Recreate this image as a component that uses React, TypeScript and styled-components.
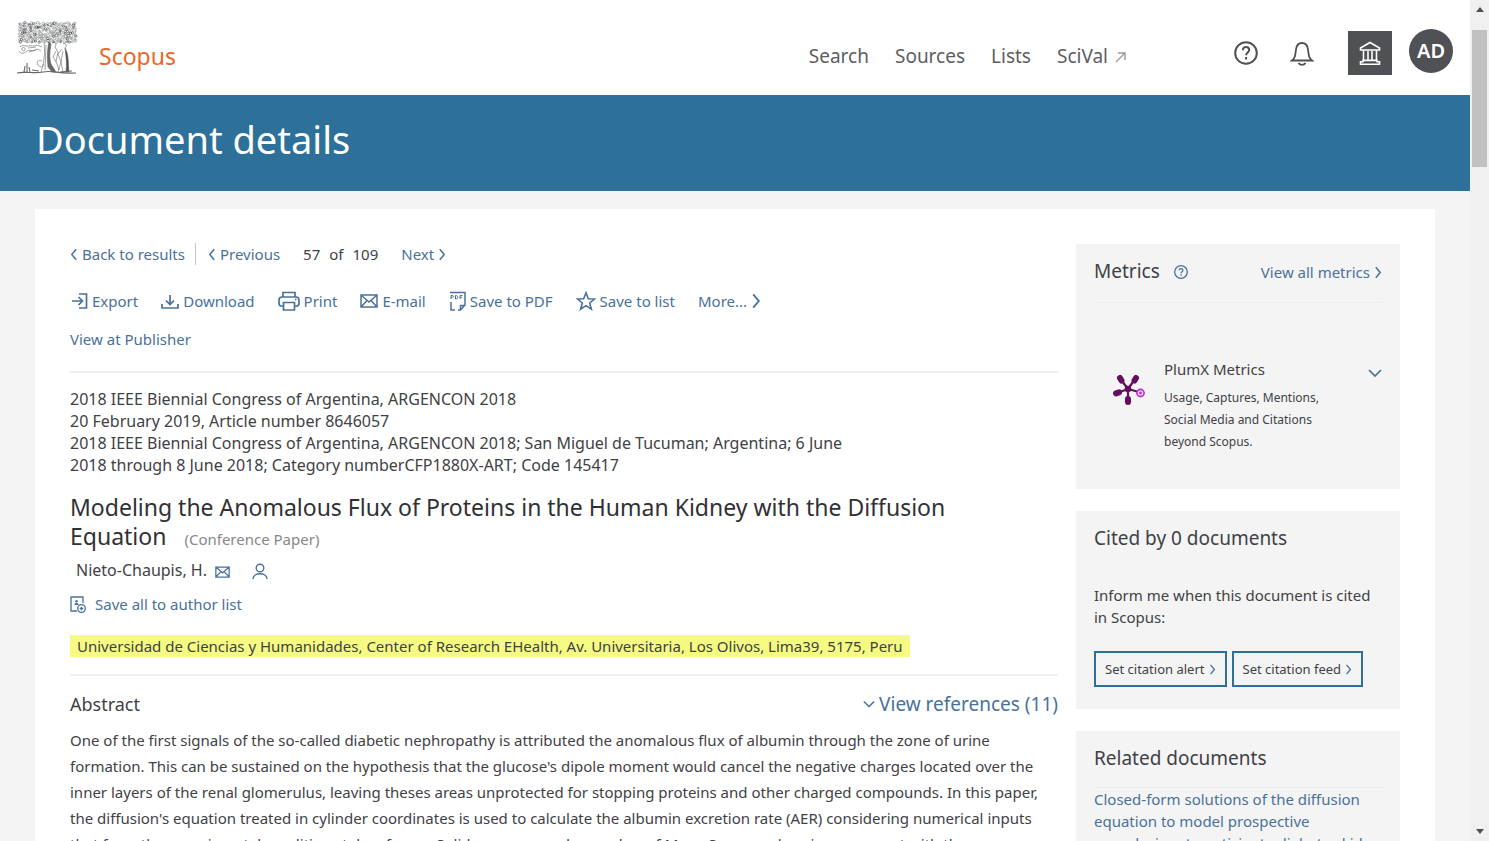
import React from "react";
import styled, { createGlobalStyle } from "styled-components";

const ink = "#3f4145";
const link = "#49719a";
const brand = "#2d7099";

const GlobalStyle = createGlobalStyle`
  *, *::before, *::after { box-sizing: border-box; }
  body {
    margin: 0;
    background: #f4f4f4;
    color: ${ink};
    font-family: "Noto Sans", "Open Sans", sans-serif;
    font-size: 15px;
    line-height: 22px;
  }
  h1, h2, p { margin: 0; padding: 0; font-weight: 400; }
  a { color: ${link}; text-decoration: none; }
  button { font: inherit; color: inherit; padding: 0; border: 0; background: none; cursor: pointer; }
  svg { display: block; flex: none; }
`;

const Window = styled.div`
  display: grid;
  grid-template-columns: minmax(0, 1fr) 19px;
  height: 100vh;
  overflow: hidden;
`;

const Page = styled.div`
  min-width: 0;
`;

const ScrollTrack = styled.div`
  display: flex;
  flex-direction: column;
  align-items: center;
  height: 100vh;
  padding: 7px 0;
  background: #f0f0f0;
`;

const ScrollThumb = styled.div`
  width: 15px;
  height: 137px;
  margin: 18px 0 auto;
  background: #c1c1c1;
`;

const Header = styled.header`
  display: flex;
  align-items: center;
  height: 95px;
  padding: 0 17px 0 16px;
  background: #fff;
`;

const Wordmark = styled.a`
  margin: 16px auto 0 21px;
  color: #e9682a;
  font-size: 23px;
  line-height: 32px;
`;

const Nav = styled.nav`
  display: flex;
  gap: 26px;
  margin: 16px 108px 0 0;
  a {
    display: flex;
    align-items: center;
    gap: 7px;
    color: #5c5e62;
    font-size: 19px;
    line-height: 28px;
  }
  svg { margin-top: 4px; }
`;

const Tools = styled.div`
  display: flex;
  align-items: center;
  margin-top: 10px;
`;

const IconButton = styled.button<{ $gap: number }>`
  display: grid;
  place-items: center;
  margin-right: ${(p) => p.$gap}px;
  color: #505155;
`;

const Institution = styled(IconButton)`
  width: 44px;
  height: 44px;
  background: #505155;
  color: #fff;
`;

const Avatar = styled.button`
  width: 44px;
  height: 44px;
  margin-bottom: 3px;
  border-radius: 50%;
  background: #505155;
  color: #fff;
  font-size: 20px;
  font-weight: 600;
`;

const Banner = styled.div`
  height: 96px;
  padding: 18px 36px;
  background: ${brand};
  color: #fff;
  h1 { font-size: 38px; line-height: 52px; }
`;

const Card = styled.main`
  display: grid;
  grid-template-columns: minmax(0, 1fr) 324px;
  gap: 18px;
  margin: 18px 35px 0;
  padding: 35px;
  background: #fff;
`;

const Row = styled.div`
  display: flex;
  align-items: center;
`;

const Pager = styled(Row)`
  height: 20px;
  gap: 23px;
`;

const IconLink = styled.a<{ $gap?: number }>`
  display: inline-flex;
  align-items: center;
  gap: ${(p) => p.$gap ?? 4}px;
  white-space: nowrap;
`;

const BackLink = styled(IconLink)`
  padding-right: 10px;
  margin-right: -11px;
  border-right: 1px solid #c5c8cc;
`;

const Position = styled.span`
  display: inline-flex;
  gap: 9px;
`;

const Actions = styled(Row)`
  height: 22px;
  margin-top: 26px;
  gap: 23px;
`;

const Publisher = styled.p`
  margin-top: 16px;
  padding-bottom: 21px;
  border-bottom: 2px solid #f0f0f1;
`;

const Source = styled.p`
  margin-top: 15px;
  font-size: 16px;
  white-space: nowrap;
`;

const Title = styled.h2`
  margin-top: 17px;
  color: #2f3135;
  font-size: 23px;
  line-height: 29px;
  white-space: nowrap;
  small { margin-left: 12px; color: #86888c; font-size: 15px; }
`;

const Authors = styled(Row)`
  margin-top: 5px;
  padding-left: 6px;
  gap: 8px;
  font-size: 16px;
  svg { margin-top: 3px; }
  a + a { margin-left: 14px; }
`;

const SaveAuthors = styled(Row)`
  margin-top: 12px;
`;

const Affiliation = styled.p`
  width: fit-content;
  margin-top: 20px;
  padding: 0 7px;
  background: #f5fb82;
  white-space: nowrap;
`;

const AbstractHead = styled(Row)`
  justify-content: space-between;
  margin-top: 17px;
  padding-top: 14px;
  border-top: 2px solid #f0f0f1;
  line-height: 28px;
  h2 { font-size: 18px; }
  a { font-size: 19px; }
`;

const Abstract = styled.p`
  margin-top: 9px;
  line-height: 26px;
  white-space: nowrap;
`;

const Sidebar = styled.aside`
  display: flex;
  flex-direction: column;
  gap: 22px;
`;

const Panel = styled.section<{ $min: number }>`
  min-height: ${(p) => p.$min}px;
  padding: 13px 18px;
  background: #f4f4f4;
  h2 { font-size: 19px; line-height: 28px; }
`;

const MetricsHead = styled(Row)`
  padding-bottom: 17px;
  border-bottom: 1px solid #ececee;
  h2 { margin-right: 14px; }
  a { margin-top: 2px; }
  a:last-child { margin-left: auto; }
`;

const Plum = styled.div`
  display: grid;
  grid-template-columns: 34px 1fr 14px;
  gap: 18px;
  align-items: start;
  margin-top: 55px;
  padding-left: 18px;
  p { margin-top: 7px; font-size: 12px; }
  > svg { margin-top: 16px; }
  button { margin-top: 8px; color: ${link}; }
`;

const Notice = styled.p`
  margin-top: 32px;
  white-space: nowrap;
`;

const Buttons = styled(Row)`
  margin-top: 23px;
  gap: 5px;
`;

const OutlineButton = styled.button`
  display: flex;
  align-items: center;
  gap: 4px;
  height: 36px;
  padding: 0 9px;
  border: 2px solid ${brand};
  font-size: 13px;
  white-space: nowrap;
  svg { color: ${link}; }
`;

const Related = styled.p`
  margin-top: 15px;
  border-top: 1px solid #ececee;
  white-space: nowrap;
`;

type ChevronProps = { dir?: "left" | "right" | "down"; size?: number };
const Chevron = ({ dir = "right", size = 13 }: ChevronProps) => {
  const d = { left: "M8 1 3 7l5 6", right: "M3 1l5 6-5 6", down: "M1 4l6 6 6-6" }[dir];
  const w = dir === "down" ? size : Math.round(size * 0.64);
  return (
    <svg width={w} height={size} viewBox={dir === "down" ? "0 0 14 14" : "1 0 9 14"} fill="none" stroke="currentColor" strokeWidth="1.7">
      <path d={d} />
    </svg>
  );
};

const Stroke = ({ w, h = w, children, sw = 1.6 }: { w: number; h?: number; sw?: number; children: React.ReactNode }) => (
  <svg width={w} height={h} viewBox={`0 0 ${w} ${h}`} fill="none" stroke="currentColor" strokeWidth={sw}>
    {children}
  </svg>
);

// Deterministic scatter, so that the crown of the tree is the same on every render.
const scatter = (n: number) => {
  const v = Math.sin(n * 127.1) * 43758.5453;
  return v - Math.floor(v);
};

const leaves = Array.from({ length: 200 }, (_, i) => {
  const col = i % 25;
  const row = Math.floor(i / 25);
  return {
    x: 3 + col * 2.3 + scatter(i + 1) * 1.8,
    y: 2.5 + row * 2.6 + scatter(i + 400) * 1.8,
    r: 0.7 + scatter(i + 900) * 0.7,
    tone: scatter(i + 1300) > 0.7 ? "#333437" : "#88898c",
  };
});

const TreeLogo = () => (
  <svg width="62" height="56" viewBox="0 0 62 56" fill="none" stroke="#66676b" strokeWidth="0.6">
    {leaves.map((l, i) => (
      <circle key={i} cx={l.x} cy={l.y} r={l.r} stroke={l.tone} />
    ))}
    <path d="M4 27c3-3 5 0 8-1s6 1 9-1l5 2M3 31c2 4 6 2 8 0s5 1 8-1 4 0 6 1M6 28c2-1 4 0 3 2s-4 1-3-2M12 28l8-1M13 32l7-2" />
    <path d="M28 22c1 9 1 18-3 30M33 22c-1 10-1 20 3 30M30 25l-1 25M26 41c-4-2-6 1-4 4s5 2 6-1" />
    <path d="M33 22c-2 8-2 17-1 25l4 5h4l-5-8c-2-7-1-14 0-20z" fill="#66676b" />
    <path d="M36 23c3-2 5 1 3 4l3 5-2 9 3 9M40 31l-3 6 3 5M47 24c3-2 4 2 2 4M46 29l-4 5 3 8-3 10M47 31l-2 11 2 10" />
    <path d="M49 28c4 6 3 15 4 24h-3c1-8 0-16-1-24z" fill="#4a4b4f" />
    <path d="M1 53c9-2 17 1 26-1s15 2 33 1M8 52l1-6M11 52V43M14 52l-1-5M16 50l7 1M44 52l12-1" strokeWidth="1.1" />
  </svg>
);

const HelpIcon = ({ size, sw }: { size: number; sw: number }) => (
  <svg width={size} height={size} viewBox="0 0 24 24" fill="none" stroke="currentColor" strokeWidth={sw}>
    <circle cx="12" cy="12" r="10.8" />
    <path d="M8.8 9.2c0-4.3 6.4-4 6.4-.2 0 2.4-3.1 2.6-3.1 5.2M12.1 16v2.4" />
  </svg>
);

const BellIcon = () => (
  <Stroke w={24} h={26} sw={1.8}>
    <path d="M2 20.500h20c-3-2-3.300-5-4-11C17.500 5 15.500 3 12 3S6.500 5 6 9.500c-.7 6-1 9-4 11zM8.500 23c1.500 2.500 5.500 2.500 7 0" />
  </Stroke>
);

const MuseumIcon = () => (
  <Stroke w={24} h={26} sw={1.6}>
    <path d="M2.500 8 12 2.500 21.500 8v2h-19zM5.500 10v10M10 11v9M14 11v9M18.500 10v10M5 20.500h14M2.500 24.200v-2.400h2.500v-1.500h14v1.500h2.500v2.400z" />
  </Stroke>
);

const ExportIcon = () => (
  <Stroke w={18} sw={1.7}>
    <path d="M9 2h7.500v14H9M2 9h10M8.500 5l4 4-4 4" />
  </Stroke>
);

const DownloadIcon = () => (
  <Stroke w={18} sw={1.7}>
    <path d="M1 12v4h16v-4M9 3v9M5 8.500l4 4 4-4" />
  </Stroke>
);

const PrintIcon = () => (
  <Stroke w={22} h={20} sw={1.7}>
    <path d="M5 6V1.500h12V6M5 15H3.500C2 15 1 14 1 12.500V9c0-2 1-3 3-3h14c2 0 3 1 3 3v3.500c0 1.500-1 2.500-2.500 2.500H17M5.500 11.500h11V19h-11zM17 8.500h1.500" />
  </Stroke>
);

const MailIcon = ({ size = 18 }: { size?: number }) => (
  <svg width={size} height={Math.round(size * 0.8)} viewBox="0 0 18 14" fill="none" stroke="currentColor" strokeWidth="1.5">
    <path d="M1 1h16v12H1zM1 1l8 7 8-7M1 13l6-6.500M17 13l-6-6.500" />
  </svg>
);

const PdfIcon = () => (
  <Stroke w={17} h={20} sw={1.5}>
    <path d="M1 1.500h15V14l-4.500 5H9M2 11v8h4M11.500 19v-4.500H16" />
    <path d="M2 8V4.500h1.500c1.200 0 1.200 1.800 0 1.800H2M6.500 4.500V8c3 0 3-3.500 0-3.500zM11 8V4.500h2.500M11 6.300h2" strokeWidth="1" />
  </Stroke>
);

const StarIcon = () => (
  <Stroke w={20} sw={1.6}>
    <path d="M10 1.800l2.300 5.900 6.200.3-4.800 4 1.700 6.200-5.400-3.500-5.400 3.500 1.700-6.200-4.800-4 6.200-.3z" />
  </Stroke>
);

const PersonIcon = () => (
  <Stroke w={16} h={17} sw={1.4}>
    <circle cx="8" cy="5" r="3.800" />
    <path d="M1 16c0-7 14-7 14 0" />
  </Stroke>
);

const AuthorListIcon = () => (
  <Stroke w={16} h={17} sw={1.3}>
    <path d="M7 15H1V1h12v6" />
    <circle cx="6.500" cy="5.200" r="1.200" fill="currentColor" stroke="none" />
    <path d="M4.500 9c0-3 4-3 4 0z" fill="currentColor" stroke="none" />
    <circle cx="11.500" cy="12.500" r="3.800" />
    <path d="M11.500 10.700v3.600M9.700 12.500h3.600" />
  </Stroke>
);

const PlumIcon = () => (
  <svg width="34" height="32" viewBox="0 0 34 32">
    <g stroke="#640e60" strokeWidth="2.200" strokeLinecap="round" fill="#640e60">
      <path d="M16 15 8.500 5M16 15l7-10M16 15 5 19M16 15v11M16 15l11 3" />
      <path d="M8 4 9.500 6.500M24 4l-1.500 2.500M4 19.300l3-1M16 28v-3" strokeWidth="6" />
      <circle cx="16" cy="15" r="2.200" />
    </g>
    <circle cx="28.500" cy="19" r="3.600" fill="#f4d9fa" stroke="#b02fd8" strokeWidth="1.600" />
    <circle cx="28.500" cy="19" r="1.400" fill="#b02fd8" />
  </svg>
);

export default function App() {
  return (
    <Window>
      <GlobalStyle />
      <Page>
        <Header>
          <TreeLogo />
          <Wordmark href="#">Scopus</Wordmark>
          <Nav>
            <a href="#">Search</a>
            <a href="#">Sources</a>
            <a href="#">Lists</a>
            <a href="#">
              SciVal
              <svg width="11" height="11" viewBox="0 0 11 11" fill="none" stroke="#9a9b9e" strokeWidth="1.4">
                <path d="M1 10l9-9M3 1h7v7" />
              </svg>
            </a>
          </Nav>
          <Tools>
            <IconButton $gap={32} aria-label="Help"><HelpIcon size={24} sw={2} /></IconButton>
            <IconButton $gap={34} aria-label="Notifications"><BellIcon /></IconButton>
            <Institution $gap={17} aria-label="Institution"><MuseumIcon /></Institution>
            <Avatar>AD</Avatar>
          </Tools>
        </Header>
        <Banner><h1>Document details</h1></Banner>
        <Card>
          <article>
            <Pager>
              <BackLink href="#"><Chevron dir="left" />Back to results</BackLink>
              <IconLink href="#"><Chevron dir="left" />Previous</IconLink>
              <Position><span>57</span><span>of</span><span>109</span></Position>
              <IconLink href="#">Next<Chevron /></IconLink>
            </Pager>
            <Actions>
              <IconLink href="#"><ExportIcon />Export</IconLink>
              <IconLink href="#"><DownloadIcon />Download</IconLink>
              <IconLink href="#"><PrintIcon />Print</IconLink>
              <IconLink href="#"><MailIcon />E-mail</IconLink>
              <IconLink href="#"><PdfIcon />Save to PDF</IconLink>
              <IconLink href="#"><StarIcon />Save to list</IconLink>
              <IconLink href="#">More...<Chevron size={16} /></IconLink>
            </Actions>
            <Publisher><a href="#">View at Publisher</a></Publisher>
            <Source>
              2018 IEEE Biennial Congress of Argentina, ARGENCON 2018<br />
              20 February 2019, Article number 8646057<br />
              2018 IEEE Biennial Congress of Argentina, ARGENCON 2018; San Miguel de Tucuman; Argentina; 6 June<br />
              2018 through 8 June 2018; Category numberCFP1880X-ART; Code 145417
            </Source>
            <Title>
              Modeling the Anomalous Flux of Proteins in the Human Kidney with the Diffusion<br />
              Equation <small>(Conference Paper)</small>
            </Title>
            <Authors>
              <span>Nieto-Chaupis, H.</span>
              <a href="#" aria-label="E-mail the author"><MailIcon size={15} /></a>
              <a href="#" aria-label="Author profile"><PersonIcon /></a>
            </Authors>
            <SaveAuthors><IconLink $gap={9} href="#"><AuthorListIcon />Save all to author list</IconLink></SaveAuthors>
            <Affiliation>Universidad de Ciencias y Humanidades, Center of Research EHealth, Av. Universitaria, Los Olivos, Lima39, 5175, Peru</Affiliation>
            <AbstractHead>
              <h2>Abstract</h2>
              <IconLink href="#"><Chevron dir="down" size={12} />View references (11)</IconLink>
            </AbstractHead>
            <Abstract>
              One of the first signals of the so-called diabetic nephropathy is attributed the anomalous flux of albumin through the zone of urine<br />
              formation. This can be sustained on the hypothesis that the glucose's dipole moment would cancel the negative charges located over the<br />
              inner layers of the renal glomerulus, leaving theses areas unprotected for stopping proteins and other charged compounds. In this paper,<br />
              the diffusion's equation treated in cylinder coordinates is used to calculate the albumin excretion rate (AER) considering numerical inputs<br />
              that form the experimental conditions taken from a Solid response and a number of Mean Square values in agreement with the
            </Abstract>
          </article>
          <Sidebar>
            <Panel $min={245}>
              <MetricsHead>
                <h2>Metrics</h2>
                <a href="#" aria-label="About metrics"><HelpIcon size={14} sw={2.2} /></a>
                <IconLink href="#">View all metrics<Chevron /></IconLink>
              </MetricsHead>
              <Plum>
                <PlumIcon />
                <div>
                  PlumX Metrics
                  <p>Usage, Captures, Mentions,<br />Social Media and Citations<br />beyond Scopus.</p>
                </div>
                <button aria-label="Expand PlumX Metrics"><Chevron dir="down" size={14} /></button>
              </Plum>
            </Panel>
            <Panel $min={198}>
              <h2>Cited by 0 documents</h2>
              <Notice>Inform me when this document is cited<br />in Scopus:</Notice>
              <Buttons>
                <OutlineButton>Set citation alert<Chevron size={11} /></OutlineButton>
                <OutlineButton>Set citation feed<Chevron size={11} /></OutlineButton>
              </Buttons>
            </Panel>
            <Panel $min={200}>
              <h2>Related documents</h2>
              <Related>
                <a href="#">Closed-form solutions of the diffusion<br />equation to model prospective<br />nanodevices to anticipate diabetes kidney</a>
              </Related>
            </Panel>
          </Sidebar>
        </Card>
      </Page>
      <ScrollTrack>
        <svg width="8" height="5" viewBox="0 0 8 5"><path d="M0 5l4-5 4 5z" fill="#505050" /></svg>
        <ScrollThumb />
        <svg width="8" height="5" viewBox="0 0 8 5"><path d="M0 0l4 5 4-5z" fill="#505050" /></svg>
      </ScrollTrack>
    </Window>
  );
}
